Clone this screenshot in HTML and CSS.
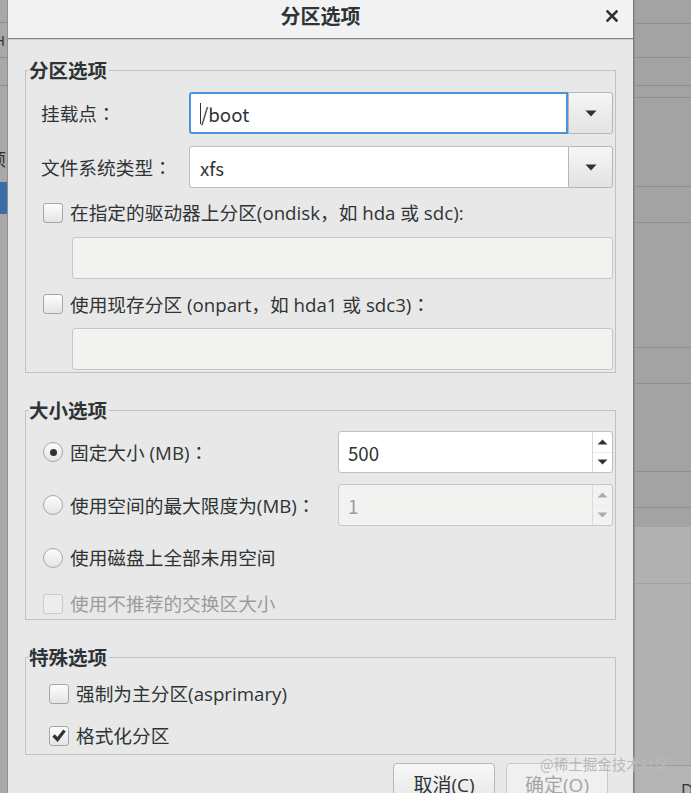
FILE: index.html
```html
<!DOCTYPE html>
<html lang="zh-CN">
<head>
<meta charset="utf-8">
<title>分区选项</title>
<link rel="stylesheet" href="styles.css">
</head>
<body>
<div class="screen">
  <div class="bg-left">
    <div class="seg l1"></div>
    <div class="seg l2"><span class="clip-h">H</span></div>
    <div class="seg l3"></div>
    <div class="seg l4"><span class="clip-x">项</span></div>
    <div class="seg lblue"></div>
    <div class="seg lrest"></div>
  </div>

  <div class="dialog">
    <div class="titlebar">
      <span></span>
      <span class="title">分区选项</span>
      <span class="close-wrap">
        <svg class="close" width="12" height="12" viewBox="0 0 12 12"><path d="M1.5 1.5 L10.5 10.5 M10.5 1.5 L1.5 10.5" stroke="#2e3436" stroke-width="2.6" stroke-linecap="square" fill="none"/></svg>
      </span>
    </div>

    <div class="content">
      <fieldset class="frame f1">
        <legend>分区选项</legend>
        <div class="combo-grid">
          <span class="lbl">挂载点<span class="fw" lang="zh-TW">：</span></span>
          <div class="combo focused">
            <div class="combo-entry"><span class="caret"></span>/boot</div>
            <div class="combo-btn"><svg width="12" height="7" viewBox="0 0 12 7"><path d="M0.5 0.5 H11.5 L6 6.5 Z" fill="#2e3436"/></svg></div>
          </div>
          <span class="lbl">文件系统类型<span class="fw" lang="zh-TW">：</span></span>
          <div class="combo">
            <div class="combo-entry">xfs</div>
            <div class="combo-btn"><svg width="12" height="7" viewBox="0 0 12 7"><path d="M0.5 0.5 H11.5 L6 6.5 Z" fill="#2e3436"/></svg></div>
          </div>
        </div>
        <div class="check-row first"><span class="cb"></span><span>在指定的驱动器上分区(ondisk，如 hda 或 sdc):</span></div>
        <div class="entry-dis"></div>
        <div class="check-row"><span class="cb"></span><span>使用现存分区 (onpart，如 hda1 或 sdc3)<span class="fw" lang="zh-TW">：</span></span></div>
        <div class="entry-dis"></div>
      </fieldset>

      <fieldset class="frame f2">
        <legend>大小选项</legend>
        <div class="size-grid">
          <div class="check-row tall"><span class="rb on"></span><span>固定大小 (MB)<span class="fw" lang="zh-TW">：</span></span></div>
          <div class="spin">
            <div class="spin-val">500</div>
            <div class="spin-btns">
              <span class="sb"><svg width="11" height="6" viewBox="0 0 11 6"><path d="M0.5 5.5 H10.5 L5.5 0.5 Z" fill="#2e3436"/></svg></span>
              <span class="sb"><svg width="11" height="6" viewBox="0 0 11 6"><path d="M0.5 0.5 H10.5 L5.5 5.5 Z" fill="#2e3436"/></svg></span>
            </div>
          </div>
          <div class="check-row tall"><span class="rb"></span><span>使用空间的最大限度为(MB)<span class="fw" lang="zh-TW">：</span></span></div>
          <div class="spin dis">
            <div class="spin-val">1</div>
            <div class="spin-btns">
              <span class="sb"><svg width="11" height="6" viewBox="0 0 11 6"><path d="M0.5 5.5 H10.5 L5.5 0.5 Z" fill="#a9abab"/></svg></span>
              <span class="sb"><svg width="11" height="6" viewBox="0 0 11 6"><path d="M0.5 0.5 H10.5 L5.5 5.5 Z" fill="#a9abab"/></svg></span>
            </div>
          </div>
          <div class="check-row tall span2"><span class="rb"></span><span>使用磁盘上全部未用空间</span></div>
          <div class="check-row span2 disabled"><span class="cb dis"></span><span>使用不推荐的交换区大小</span></div>
        </div>
      </fieldset>

      <fieldset class="frame f3">
        <legend>特殊选项</legend>
        <div class="check-row"><span class="cb"></span><span>强制为主分区(asprimary)</span></div>
        <div class="check-row second"><span class="cb checked"><svg width="18" height="18" viewBox="0 0 18 18"><path d="M3.5 8.5 L7.5 12.5 L14.5 3.5" stroke="#2e3436" stroke-width="3.2" fill="none"/></svg></span><span>格式化分区</span></div>
      </fieldset>

      <div class="buttons">
        <button class="btn">取消(C)</button>
        <button class="btn" disabled>确定(O)</button>
      </div>
    </div>
  </div>

  <div class="bg-right">
    <div class="seg r1"></div>
    <div class="seg r2"></div>
    <div class="seg r3"></div>
    <div class="seg r4"></div>
    <div class="seg r5"></div>
    <div class="seg r6"></div>
    <div class="seg r7"></div>
    <div class="seg r8"></div>
    <div class="seg r9"></div>
    <div class="seg r10"></div>
    <div class="seg r11"></div>
    <div class="seg r12"></div>
    <div class="seg r13"></div>
    <div class="seg r14"><span class="clip-d">D</span></div>
  </div>

  <div class="watermark">@稀土掘金技术社区</div>
</div>
</body>
</html>
```

FILE: styles.css
```css
* { box-sizing: border-box; }
html, body { margin: 0; padding: 0; }
body {
  width: 691px;
  height: 793px;
  overflow: hidden;
  font-family: "Open Sans", "Noto Sans CJK SC", sans-serif;
  color: #2e3436;
}
.screen {
  position: relative;
  display: flex;
  width: 691px;
  height: 793px;
  background: #a3a3a3;
}
.fw { font-family: "Noto Sans CJK TC", sans-serif; }

/* background windows */
.bg-left {
  width: 7px;
  flex: none;
  display: flex;
  flex-direction: column;
  background: #a8a8a8;
  overflow: hidden;
}
.bg-right {
  flex: 1;
  display: flex;
  flex-direction: column;
  background: #a3a3a3;
  border-left: 1px solid #939393;
  overflow: hidden;
}
.seg { flex: none; border-bottom: 1px solid #8d8d8d; position: relative; }
.l1 { height: 23px; }
.l2 { height: 35px; display: flex; align-items: center; }
.l3 { height: 28px; }
.l4 { height: 96px; border-bottom: none; padding-top: 64px; }
.lblue { height: 32px; background: #3a6ca8; border-bottom: none; }
.lrest { flex: 1; border-bottom: none; }
.clip-h { font-size: 15px; margin-left: -6px; color: #2e3436; line-height: 18px; }
.clip-x { display: block; font-size: 17px; margin-left: -11px; line-height: 20px; color: #2e3436; }

.r1 { height: 24px; }
.r2 { height: 34px; }
.r3 { height: 28px; }
.r4 { height: 12px; }
.r5 { height: 89px; }
.r6 { height: 36px; }
.r7 { height: 125px; }
.r8 { height: 36px; }
.r9 { height: 88px; }
.r10 { height: 36px; }
.r11 { height: 19px; border-bottom: none; }
.r12 { height: 57px; background: #b1b1b1; border-bottom-color: #a2a2a2; }
.r13 { height: 182px; background: #b1b1b1; border-bottom-color: #999; }
.r14 { flex: 1; background: #b4b4b4; border-bottom: none; }
.clip-d { position: absolute; left: 46px; top: 14px; font-size: 17px; line-height: 20px; color: #2e3436; }

/* dialog */
.dialog {
  width: 627px;
  flex: none;
  display: flex;
  flex-direction: column;
  background: #e8e8e8;
  border-left: 1px solid #8f8f8f;
  border-right: 1px solid #7c7c7c;
}
.titlebar {
  height: 39px;
  flex: none;
  display: grid;
  grid-template-columns: 1fr auto 1fr;
  align-items: start;
  background: #f2f2f2;
  border-bottom: 1px solid #858585;
  box-shadow: 0 1px 0 #cfcfcf;
}
.title {
  font-family: "Noto Sans CJK SC", sans-serif;
  font-weight: 700;
  font-size: 20px;
  line-height: 24px;
  padding-top: 4px;
  color: #2e3436;
}
.close-wrap {
  justify-self: end;
  margin-right: 15px;
  padding-top: 10px;
  display: flex;
}

.content {
  padding: 0 17px;
  display: flex;
  flex-direction: column;
}

.frame {
  margin: 0;
  border: 1px solid #c2c2c2;
  min-width: 0;
}
.frame legend {
  font-family: "Noto Sans CJK SC", sans-serif;
  font-weight: 700;
  font-size: 19.5px;
  line-height: 24px;
  height: 24px;
  padding: 0 2px 0 0;
  color: #2e3436;
}
.f1 { margin-top: 19px; padding: 10px 2px 2px 15px; }
.f1 legend { margin-left: -12px; }
.f2 { margin-top: 25px; padding: 9px 2px 1px 15px; }
.f2 legend { margin-left: -12px; }
.f3 { margin-top: 25px; padding: 11px 2px 4px 18px; }
.f3 legend { margin-left: -15px; }

.combo-grid {
  display: grid;
  grid-template-columns: 148px 1fr;
  row-gap: 12px;
  align-items: center;
}
.lbl { font-size: 18.7px; line-height: 24px; }
.combo { display: flex; height: 42px; }
.combo-entry {
  flex: 1;
  background: #fff;
  border: 1px solid #bfbfbf;
  border-right: none;
  border-radius: 3px 0 0 3px;
  padding-left: 10px;
  display: flex;
  align-items: center;
  font-family: "Noto Sans CJK SC", sans-serif;
  font-size: 18.7px;
  color: #2e3436;
}
.focused .combo-entry {
  border: 2px solid #4d93dc;
  padding-left: 9px;
}
.caret {
  width: 1px;
  height: 21px;
  background: #2e3436;
}
.combo-btn {
  width: 45px;
  flex: none;
  border: 1px solid #b6b6b6;
  border-radius: 0 3px 3px 0;
  background: linear-gradient(#f6f6f6, #e2e2e2);
  display: flex;
  align-items: center;
  justify-content: center;
}

.check-row {
  display: flex;
  align-items: center;
  gap: 7px;
  height: 28px;
  margin-left: 2px;
  font-size: 18.7px;
  line-height: 24px;
  white-space: nowrap;
}
.f1 .check-row { margin-top: 11px; }
.f3 .check-row { margin-left: 5px; }
.f3 .check-row.second { margin-top: 14px; }
.check-row.tall { height: 42px; }
.check-row.disabled { color: #9a9c9c; }

.cb {
  width: 20px;
  height: 20px;
  flex: none;
  border: 1px solid #a6a6a6;
  border-radius: 3px;
  background: linear-gradient(#fdfdfd, #e4e4e4);
  display: flex;
  align-items: center;
  justify-content: center;
}
.cb.dis {
  border-color: #cacaca;
  background: #ededed;
}
.rb {
  width: 20px;
  height: 20px;
  flex: none;
  border: 1px solid #a6a6a6;
  border-radius: 50%;
  background: linear-gradient(#fdfdfd, #e4e4e4);
  display: flex;
  align-items: center;
  justify-content: center;
}
.rb.on::after {
  content: "";
  width: 7px;
  height: 7px;
  border-radius: 50%;
  background: #2e3436;
}

.entry-dis {
  height: 42px;
  margin: 10px 0 0 31px;
  background: #f2f2f0;
  border: 1px solid #c6c6c6;
  border-radius: 3px;
}

.size-grid {
  display: grid;
  grid-template-columns: 297px 1fr;
  grid-template-rows: 42px 42px 42px 28px;
  row-gap: 11px;
  align-items: center;
}
.span2 { grid-column: 1 / 3; }

.spin {
  height: 42px;
  display: flex;
  background: #fff;
  border: 1px solid #bfbfbf;
  border-radius: 3px;
}
.spin-val {
  flex: 1;
  display: flex;
  align-items: center;
  padding-left: 9px;
  font-family: "Noto Sans CJK SC", sans-serif;
  font-size: 18.7px;
  color: #2e3436;
}
.spin.dis { background: #f2f2f0; border-color: #c6c6c6; }
.spin.dis .spin-val { color: #9a9c9c; }
.spin-btns {
  width: 20px;
  flex: none;
  display: flex;
  flex-direction: column;
  border-left: 1px solid #dadada;
}
.sb {
  flex: 1;
  display: flex;
  align-items: center;
  justify-content: center;
}
.sb + .sb { border-top: 1px solid #ececec; }

.buttons {
  display: flex;
  justify-content: flex-end;
  gap: 11px;
  margin-top: 8px;
  padding-right: 8px;
}
.btn {
  width: 102px;
  height: 44px;
  font-family: "Open Sans", "Noto Sans CJK SC", sans-serif;
  font-size: 19px;
  color: #2e3436;
  border: 1px solid #b6b6b6;
  border-radius: 4px;
  background: linear-gradient(#f7f7f7, #e6e6e6);
  padding: 0 0 2px 0;
  display: flex;
  justify-content: center;
  align-items: center;
}
.btn:disabled {
  color: #a3a5a5;
  border-color: #c9c9c9;
  background: #f0f0f0;
}

.watermark {
  position: absolute;
  left: 540px;
  top: 754px;
  font-family: "Noto Sans CJK SC", sans-serif;
  font-size: 14.5px;
  line-height: 20px;
  color: #b9b9b9;
  white-space: nowrap;
}
```
